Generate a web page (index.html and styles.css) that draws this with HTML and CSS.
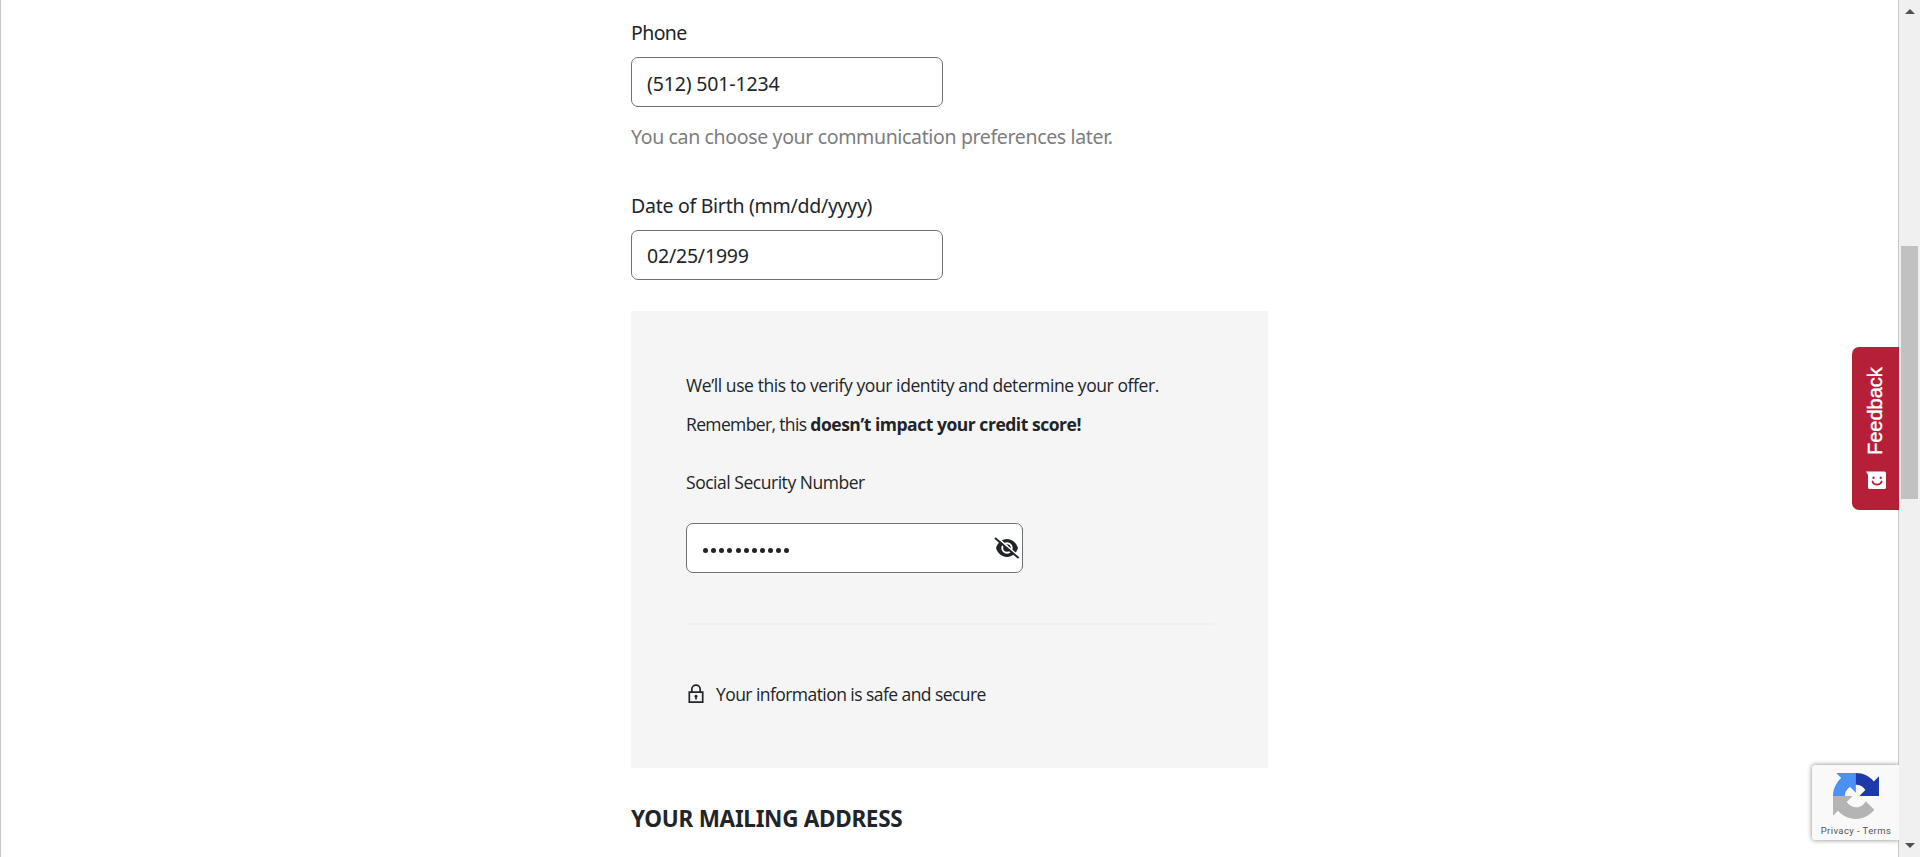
FILE: index.html
```html
<!DOCTYPE html>
<html lang="en">
<head>
<meta charset="utf-8">
<title>Your information</title>
<link rel="stylesheet" href="styles.css">
</head>
<body>
<main class="page">
  <form class="form">
    <div class="field">
      <label class="label label-phone" for="phone">Phone</label>
      <input class="input input-phone" id="phone" type="text" value="(512) 501-1234">
      <p class="hint"><span>You can choose your communication preferences later.</span></p>
    </div>
    <div class="field field-dob">
      <label class="label label-dob" for="dob">Date of Birth (mm/dd/yyyy)</label>
      <input class="input input-dob" id="dob" type="text" value="02/25/1999">
    </div>
    <section class="panel">
      <p class="copy copy-verify">We’ll use this to verify your identity and determine your offer.</p>
      <p class="copy copy-remember">Remember, this <strong>doesn’t impact your credit score!</strong></p>
      <label class="copy copy-ssn">Social Security Number</label>
      <div class="ssn">
        <span class="dots"><i></i><i></i><i></i><i></i><i></i><i></i><i></i><i></i><i></i><i></i><i></i></span>
        <svg class="eye" viewBox="0 0 26 22" width="26" height="22">
          <path fill="#212529" fill-rule="evenodd" d="M13 2C8 2 3.700 5.500 2 11c1.700 5.500 6 9 11 9s9.300-3.500 11-9C22.300 5.500 18 2 13 2zm0 3.300a5.700 5.700 0 1 1 0 11.400 5.700 5.700 0 0 1 0-11.400z"/>
          <circle cx="13" cy="11" r="3.800" fill="#212529"/>
          <circle cx="12.300" cy="8.800" r="1.300" fill="#fff"/>
          <path d="M2.300-.2 25.500 20" stroke="#fff" stroke-width="1.700"/>
          <path d="M1 1l23.600 20" stroke="#212529" stroke-width="2"/>
        </svg>
      </div>
      <hr class="rule">
      <div class="secure">
        <svg class="lock" viewBox="0 0 18 20" width="18" height="20" fill="none" stroke="#212529" stroke-width="1.700">
          <path d="M2.300 8.200h13.400v9.900H2.300zM4.800 8V5.300a4.200 4.200 0 0 1 8.400 0V8"/>
          <circle cx="9" cy="12.200" r="1.400" fill="#212529" stroke="none"/>
          <path d="M9 12v3.400"/>
        </svg>
        <span class="copy copy-secure">Your information is safe and secure</span>
      </div>
    </section>
    <h2 class="heading">YOUR MAILING ADDRESS</h2>
  </form>
</main>

<div class="scrollbar">
  <span class="arrow arrow-up"></span>
  <span class="thumb"></span>
  <span class="arrow arrow-down"></span>
</div>

<div class="feedback">
  <span class="feedback-text">Feedback</span>
  <svg class="feedback-icon" viewBox="0 0 20 19" width="20" height="19">
    <path fill="#fff" d="M0 .5h18.500A1.500 1.500 0 0 1 20 2v14.500a1.500 1.500 0 0 1-1.500 1.500h-15A1.500 1.500 0 0 1 2 16.500V4z"/>
    <g fill="none" stroke="#b61f38" stroke-width="1.800" stroke-linecap="round">
      <path d="M6.500 10.500c1.400 4.200 7.600 4.200 9.200 0"/>
      <path d="M7.500 6.700v.2M14.700 6.700v.2" stroke-width="2.200"/>
    </g>
  </svg>
</div>

<div class="captcha">
  <svg viewBox="0 0 64 64" width="46" height="46">
    <path fill="#1c3aa9" d="M64 31.955l-.037-1.375V4.687l-7.158 7.158c-5.858-7.170-14.771-11.750-24.755-11.750-10.389 0-19.618 4.963-25.459 12.650l11.733 11.856a15.550 15.550 0 0 1 4.754-5.334c2.050-1.600 4.955-2.909 8.971-2.909.485 0 .86.057 1.135.163 4.977.393 9.288 3.139 11.829 7.121l-8.305 8.305c10.519-.041 22.402-.066 27.292.011z"/>
    <path fill="#4a90f5" d="M31.862.094l-1.375.037H4.594l7.158 7.158C4.581 13.147 0 22.060 0 32.043c0 10.389 4.963 19.618 12.650 25.459l11.856-11.733a15.550 15.550 0 0 1-5.334-4.754c-1.600-2.050-2.909-4.955-2.909-8.971 0-.485.057-.86.163-1.135.393-4.977 3.139-9.288 7.121-11.829l8.305 8.305c.041-10.519.066-22.402-.011-27.292z"/>
    <path fill="#b4b4b4" d="M.001 32.045l.037 1.375v25.893l7.158-7.158c5.858 7.170 14.771 11.750 24.755 11.750 10.389 0 19.618-4.963 25.459-12.650L45.677 39.399a15.550 15.550 0 0 1-4.754 5.334c-2.050 1.600-4.955 2.909-8.971 2.909-.485 0-.86-.057-1.135-.163-4.977-.393-9.288-3.139-11.829-7.121l8.305-8.305c-10.519.041-22.402.066-27.292-.008z"/>
  </svg>
  <span class="captcha-links">Privacy - Terms</span>
</div>
</body>
</html>
```
FILE: styles.css
```css
* { box-sizing: border-box; }
body {
  margin: 0;
  height: 857px;
  overflow: hidden;
  background: #fff;
  color: #212529;
  font-family: "Noto Sans", sans-serif;
}
.page {
  height: 857px;
  border-left: 1px solid #c8c8c8;
  padding-left: 630px;
}
.form { width: 637px; padding-top: 18px; }
.label { display: block; font-size: 19.500px; line-height: 30px; margin-bottom: 9px; white-space: nowrap; }
.label-phone { letter-spacing: -0.600px; }
.label-dob { letter-spacing: -0.270px; }
.input {
  display: block;
  width: 312px;
  height: 50px;
  border: 1px solid #6f7175;
  border-radius: 7px;
  padding: 3px 15px 0;
  background: #fff;
  color: #212529;
  font-family: inherit;
  font-size: 19.500px;
}
.input-phone { letter-spacing: -0.150px; }
.input-dob { padding-top: 1px; letter-spacing: -0.200px; }
.hint { margin: 15px 0 0; font-size: 19.500px; line-height: 30px; color: #7d7d7d; white-space: nowrap; letter-spacing: -0.350px; }
.field-dob { margin-top: 39px; }
.panel { height: 457px; margin-top: 31px; padding: 59px 54px 0 55px; background: #f5f5f5; }
.copy { display: block; margin: 0; font-family: "Open Sans", sans-serif; font-size: 17.500px; line-height: 30px; white-space: nowrap; letter-spacing: -0.410px; }
.copy-remember { margin-top: 9px; letter-spacing: -0.640px; }
.copy-remember strong { letter-spacing: -0.470px; }
.copy-ssn { margin-top: 28px; letter-spacing: -0.470px; }
.copy-secure { letter-spacing: -0.560px; }
.ssn {
  display: flex;
  align-items: center;
  justify-content: space-between;
  width: 337px;
  height: 50px;
  margin-top: 26px;
  border: 1px solid #6f7175;
  border-radius: 7px;
  padding: 0 2px 0 16px;
  background: #fff;
}
.dots { display: flex; gap: 3.150px; padding-top: 5px; }
.dots i { width: 5px; height: 5px; border-radius: 50%; background: #212529; }
.eye { margin-top: -1px; }
.rule { height: 2px; margin: 50px 0 0; border: 0; background: #f0f0f0; }
.secure { display: flex; align-items: center; gap: 11px; margin-top: 54px; padding-left: 1px; }
.heading { margin: 34px 0 0; font-size: 22.500px; line-height: 34px; font-weight: 700; letter-spacing: -0.280px; white-space: nowrap; }
.feedback {
  position: absolute;
  left: 1852px;
  top: 347px;
  width: 47px;
  height: 163px;
  display: flex;
  flex-direction: column;
  align-items: center;
  gap: 16px;
  padding: 21px 0 0 0;
  border-radius: 7px 0 0 7px;
  background: #b61f38;
}
.feedback-text {
  height: 87px;
  margin-right: 1px;
  writing-mode: vertical-rl;
  transform: rotate(180deg);
  color: #fff;
  font: 20px/24px "Liberation Sans", sans-serif;
  -webkit-text-stroke: 0.400px #fff;
  white-space: nowrap;
}
.captcha {
  position: absolute;
  left: 1812px;
  top: 765px;
  width: 87px;
  height: 75px;
  display: flex;
  flex-direction: column;
  align-items: center;
  padding: 8px 0 0 1px;
  border-radius: 3px 0 0 3px;
  background: #f9f9f9;
  box-shadow: 0 0 5px #808080;
  clip-path: inset(-8px 0 -8px -8px);
}
.captcha-links { margin-top: 5px; color: #555; font: 9.500px/14px Roboto, sans-serif; letter-spacing: 0.400px; white-space: nowrap; }
.scrollbar {
  position: absolute;
  left: 1898px;
  top: 0;
  width: 22px;
  height: 857px;
  display: flex;
  flex-direction: column;
  align-items: center;
  border-left: 1px solid #c8c8c8;
  background: #f0f0f0;
}
.arrow { border: 5px solid transparent; }
.arrow-up { margin-top: 4px; border-bottom-color: #505050; }
.thumb { width: 17px; height: 253px; margin-top: 232px; background: #c1c1c1; }
.arrow-down { margin-top: 344px; border-top-color: #505050; }
```
